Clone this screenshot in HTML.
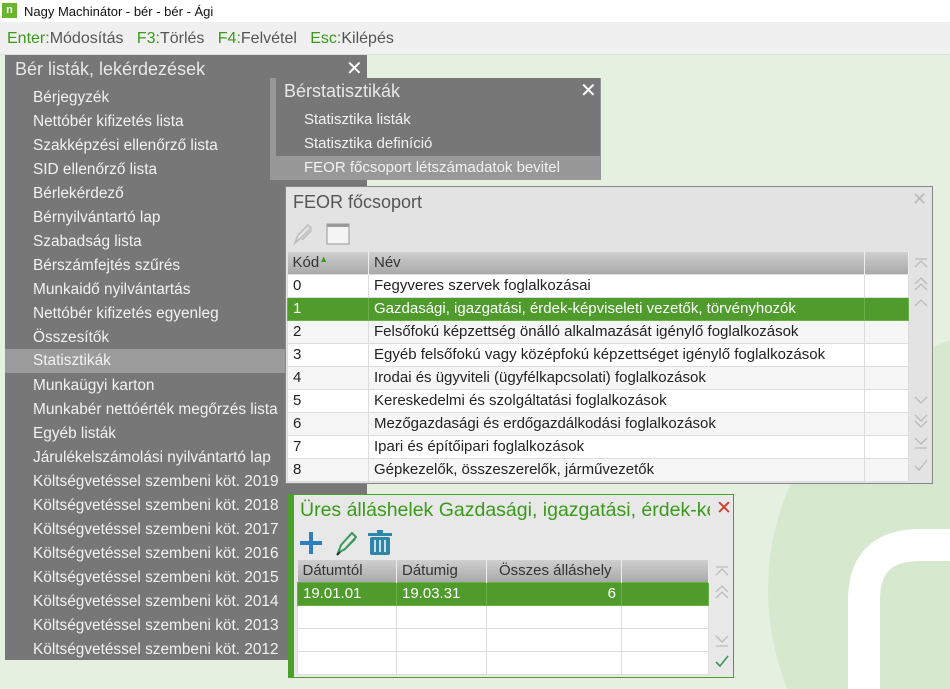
<!DOCTYPE html><html><head><meta charset="utf-8"><style>
*{margin:0;padding:0;box-sizing:border-box}
html,body{overflow:hidden}
body{width:950px;height:689px;position:relative;background:#e5f0e0;font-family:"Liberation Sans",sans-serif;font-size:15px}
.abs{position:absolute}
.tb{left:0;top:0;width:950px;height:22px;background:#fff;font-size:13px;color:#111}
.mb{left:0;top:22px;width:950px;height:33px;background:#f0f0f0;border-bottom:1px solid #ddd;font-size:16px;color:#555;line-height:33px;padding-left:7px;white-space:nowrap}
.mb b{font-weight:normal;color:#3a9a1a}
.menu{left:5px;top:55px;width:362px;height:605px;background:#777;color:#f2f2f2;font-size:15.4px}
.menu .t{position:absolute;left:10px;top:4px;font-size:18px;color:#e8e8e8}
.menu .x{position:absolute;left:341px;top:1px;font-size:20px;color:#fff}
.menu .it{position:absolute;left:0;width:362px;height:24px;line-height:24px;padding-left:28px;top:31px}
.pop{left:270px;top:78px;width:331px;height:102px;background:#989898}
.pop .in{position:absolute;left:6px;top:0;width:324px;height:78px;background:#777}
.pop .t{position:absolute;left:14px;top:3px;font-size:18px;color:#e8e8e8}
.pop .x{position:absolute;left:310px;top:0;font-size:20px;color:#fff}
.pop .it{position:absolute;left:34px;color:#f2f2f2}
.feor{left:285px;top:186px;width:648px;height:298px;background:#e3e3e3;border:1px solid #888;overflow:hidden}
table{border-collapse:collapse;position:absolute;table-layout:fixed}
td{height:23px;border:1px solid #ddd;padding-left:5px;white-space:nowrap;overflow:hidden;color:#222}
th{height:22px;font-weight:normal;text-align:left;padding-left:5px;background:linear-gradient(#cfcfcf,#a9a9a9);border-right:1px solid #eee;color:#333}
tr.sel td{background:#4f9c2c;color:#fff;border-color:#6aaf48}
tr.alt td{background:#f6f6f6}
tr.w td{background:#fff}
.ures{left:288px;top:494px;width:446px;height:184px;background:#e8e8e8;border:1px solid #4aa02a;border-left:6px solid #4aa02a;overflow:hidden}
</style></head><body>
<svg class="abs" style="left:0;top:0" width="950" height="689"><circle cx="1030" cy="590" r="262" fill="#d6e9ce"/><path d="M864 720 V600 Q864 545 920 545 H990" stroke="#fff" stroke-width="32" fill="none" stroke-linecap="round"/></svg>
<div class="abs tb"><span style="position:absolute;left:2px;top:3px;width:15px;height:15px;background:#6ab42e;color:#fff;font-size:11px;text-align:center;line-height:14px;font-weight:bold">n</span><span style="position:absolute;left:24px;top:4px">Nagy Machinátor - bér - bér - Ági</span></div>
<div class="abs mb"><b>Enter:</b>Módosítás &nbsp; <b>F3:</b>Törlés &nbsp; <b>F4:</b>Felvétel &nbsp; <b>Esc:</b>Kilépés</div>
<div class="abs menu"><div class="t">Bér listák, lekérdezések</div><div class="x">✕</div>
<div class="it" style="top:31px">Bérjegyzék</div>
<div class="it" style="top:55px">Nettóbér kifizetés lista</div>
<div class="it" style="top:79px">Szakképzési ellenőrző lista</div>
<div class="it" style="top:103px">SID ellenőrző lista</div>
<div class="it" style="top:127px">Bérlekérdező</div>
<div class="it" style="top:151px">Bérnyilvántartó lap</div>
<div class="it" style="top:175px">Szabadság lista</div>
<div class="it" style="top:199px">Bérszámfejtés szűrés</div>
<div class="it" style="top:223px">Munkaidő nyilvántartás</div>
<div class="it" style="top:247px">Nettóbér kifizetés egyenleg</div>
<div class="it" style="top:271px">Összesítők</div>
<div class="it" style="top:294px;background:#9b9b9b">Statisztikák</div>
<div class="it" style="top:319px">Munkaügyi karton</div>
<div class="it" style="top:343px">Munkabér nettóérték megőrzés lista</div>
<div class="it" style="top:367px">Egyéb listák</div>
<div class="it" style="top:391px">Járulékelszámolási nyilvántartó lap</div>
<div class="it" style="top:415px">Költségvetéssel szembeni köt. 2019</div>
<div class="it" style="top:439px">Költségvetéssel szembeni köt. 2018</div>
<div class="it" style="top:463px">Költségvetéssel szembeni köt. 2017</div>
<div class="it" style="top:487px">Költségvetéssel szembeni köt. 2016</div>
<div class="it" style="top:511px">Költségvetéssel szembeni köt. 2015</div>
<div class="it" style="top:535px">Költségvetéssel szembeni köt. 2014</div>
<div class="it" style="top:559px">Költségvetéssel szembeni köt. 2013</div>
<div class="it" style="top:583px">Költségvetéssel szembeni köt. 2012</div>
</div>
<div class="abs pop"><div class="in"></div><div class="t">Bérstatisztikák</div><div class="x">✕</div>
<div class="it" style="top:33px">Statisztika listák</div>
<div class="it" style="top:57px">Statisztika definíció</div>
<div class="it" style="top:81px">FEOR főcsoport létszámadatok bevitel</div></div>
<div class="abs feor">
<div style="position:absolute;left:7px;top:5px;font-size:18px;color:#555">FEOR főcsoport</div>
<div style="position:absolute;left:626px;top:2px;font-size:18px;color:#bbb">✕</div>
<svg style="position:absolute;left:6px;top:35px" width="60" height="24"><path d="M3 21 L6 13 L16 3 L19 6 L9 16 Z M10 18 L20 8" stroke="#bbb" stroke-width="1.5" fill="none"/><rect x="35" y="2" width="22" height="20" fill="#f4f4f4" stroke="#999"/><rect x="35" y="2" width="22" height="3" fill="#999"/></svg>
<table style="left:1px;top:65px;width:622px">
<tr><th style="width:81px">Kód<span style="color:#3a9a1a;font-size:9px;vertical-align:top">▲</span></th><th style="width:496px">Név</th><th></th></tr>
<tr class="w"><td>0</td><td>Fegyveres szervek foglalkozásai</td><td></td></tr>
<tr class="sel"><td>1</td><td>Gazdasági, igazgatási, érdek-képviseleti vezetők, törvényhozók</td><td></td></tr>
<tr class="alt"><td>2</td><td>Felsőfokú képzettség önálló alkalmazását igénylő foglalkozások</td><td></td></tr>
<tr class="w"><td>3</td><td>Egyéb felsőfokú vagy középfokú képzettséget igénylő foglalkozások</td><td></td></tr>
<tr class="alt"><td>4</td><td>Irodai és ügyviteli (ügyfélkapcsolati) foglalkozások</td><td></td></tr>
<tr class="w"><td>5</td><td>Kereskedelmi és szolgáltatási foglalkozások</td><td></td></tr>
<tr class="alt"><td>6</td><td>Mezőgazdasági és erdőgazdálkodási foglalkozások</td><td></td></tr>
<tr class="w"><td>7</td><td>Ipari és építőipari foglalkozások</td><td></td></tr>
<tr class="alt"><td>8</td><td>Gépkezelők, összeszerelők, járművezetők</td><td></td></tr>
</table>
<svg style="position:absolute;left:623px;top:66px" width="24" height="230" fill="none" stroke="#bbb" stroke-width="1.3"><path d="M6 6H18M6 14L12 8L18 14"/><path d="M6 31L12 25L18 31M6 37L12 31L18 37"/><path d="M6 53L12 47L18 53"/><path d="M6 144L12 150L18 144"/><path d="M6 162L12 168L18 162M6 168L12 174L18 168"/><path d="M6 185L12 191L18 185M6 195H18"/><path d="M6 213L10 217L18 207"/></svg>
</div>
<div class="abs ures">
<div style="position:absolute;left:6px;top:4px;width:410px;overflow:hidden;white-space:nowrap;font-size:19.5px;color:#3a9a1a">Üres álláshelek Gazdasági, igazgatási, érdek-képviseleti</div>
<div style="position:absolute;left:422px;top:2px;font-size:19px;color:#d23b2b">✕</div>
<svg style="position:absolute;left:4px;top:33px" width="104" height="30"><path d="M13 4 V26 M2 15 H24" stroke="#2f7fc0" stroke-width="4"/><path d="M40 25 L43 17 L54 5 L58 9 L47 21 Z M46 22 L57 11" stroke="#3a9a5a" stroke-width="2" fill="none"/><path d="M39 27 L42 24" stroke="#333" stroke-width="2"/><rect x="72" y="9" width="20" height="18" rx="2" fill="#2f86a8"/><rect x="70" y="5" width="24" height="3" fill="#2f86a8"/><rect x="79" y="2" width="6" height="3" fill="#2f86a8"/><path d="M77 12V24M82 12V24M87 12V24" stroke="#fff" stroke-width="1.5"/></svg>
<table style="left:3px;top:65px;width:412px">
<tr><th style="width:99px">Dátumtól</th><th style="width:90px">Dátumig</th><th style="width:135px;padding-left:12px">Összes álláshely</th><th></th></tr>
<tr class="sel"><td>19.01.01</td><td>19.03.31</td><td style="text-align:right;padding-right:5px">6</td><td></td></tr>
<tr class="w"><td></td><td></td><td></td><td></td></tr>
<tr class="w"><td></td><td></td><td></td><td></td></tr>
<tr class="w"><td></td><td></td><td></td><td></td></tr>
</table>
<svg style="position:absolute;left:416px;top:66px" width="24" height="115" fill="none" stroke-width="1.3"><path stroke="#bbb" d="M6 6H18M6 14L12 8L18 14"/><path stroke="#bbb" d="M6 31L12 25L18 31M6 37L12 31L18 37"/><path stroke="#bbb" d="M6 75L12 81L18 75M6 85H18"/><path stroke="#3a9a5a" stroke-width="1.6" d="M6 101L10 105L18 95"/></svg>
</div>
</body></html>
